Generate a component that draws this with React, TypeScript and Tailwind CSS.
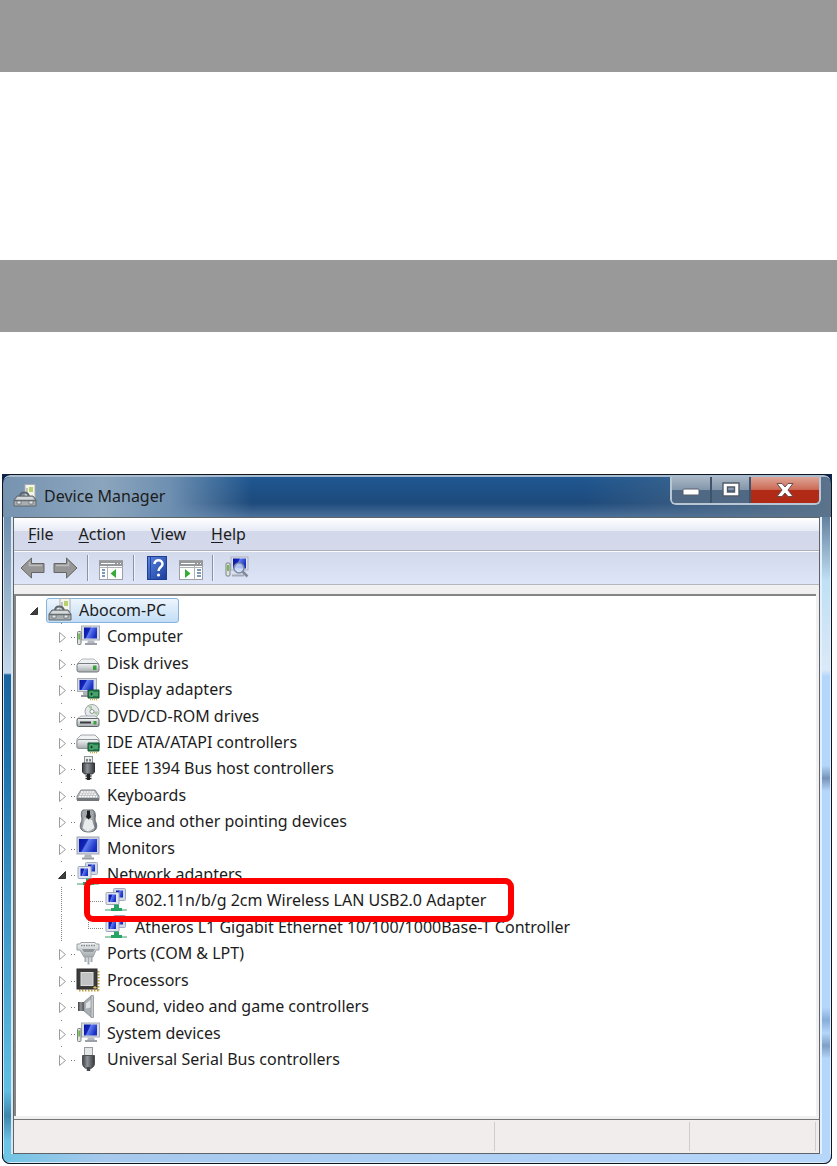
import React from 'react';

type IconName =
  | 'root' | 'computer' | 'disk' | 'display' | 'dvd' | 'ide' | 'firewire' | 'keyboard' | 'mouse'
  | 'monitor' | 'network' | 'ports' | 'cpu' | 'sound' | 'usb';

interface Device {
  label: string;
  icon: IconName;
  children?: { label: string; highlighted?: boolean }[];
}

const devices: Device[] = [
  { label: 'Computer', icon: 'computer' },
  { label: 'Disk drives', icon: 'disk' },
  { label: 'Display adapters', icon: 'display' },
  { label: 'DVD/CD-ROM drives', icon: 'dvd' },
  { label: 'IDE ATA/ATAPI controllers', icon: 'ide' },
  { label: 'IEEE 1394 Bus host controllers', icon: 'firewire' },
  { label: 'Keyboards', icon: 'keyboard' },
  { label: 'Mice and other pointing devices', icon: 'mouse' },
  { label: 'Monitors', icon: 'monitor' },
  {
    label: 'Network adapters',
    icon: 'network',
    children: [
      { label: '802.11n/b/g 2cm Wireless LAN USB2.0 Adapter', highlighted: true },
      { label: 'Atheros L1 Gigabit Ethernet 10/100/1000Base-T Controller' },
    ],
  },
  { label: 'Ports (COM & LPT)', icon: 'ports' },
  { label: 'Processors', icon: 'cpu' },
  { label: 'Sound, video and game controllers', icon: 'sound' },
  { label: 'System devices', icon: 'computer' },
  { label: 'Universal Serial Bus controllers', icon: 'usb' },
];

// Shared gradients, referenced by id from every icon
const IconDefs = () => (
  <svg width="0" height="0" className="absolute" aria-hidden="true">
    <defs>
      <linearGradient id="metal" x1="0" y1="0" x2="0" y2="1">
        <stop offset="0" stopColor="#f4f6f7" />
        <stop offset="1" stopColor="#a4a9ac" />
      </linearGradient>
      <linearGradient id="steel" x1="0" y1="0" x2="1" y2="0">
        <stop offset="0" stopColor="#6f757b" />
        <stop offset=".45" stopColor="#f2f4f5" />
        <stop offset="1" stopColor="#5c6168" />
      </linearGradient>
      <linearGradient id="screen" x1="0" y1="0" x2="1" y2="0.4">
        <stop offset="0" stopColor="#0715a4" />
        <stop offset=".42" stopColor="#1426b8" />
        <stop offset=".5" stopColor="#5f7cf0" />
        <stop offset="1" stopColor="#1a2fc4" />
      </linearGradient>
      <linearGradient id="dark" x1="0" y1="0" x2="1" y2="0">
        <stop offset="0" stopColor="#3c3f43" />
        <stop offset=".4" stopColor="#8f9398" />
        <stop offset="1" stopColor="#333539" />
      </linearGradient>
      <linearGradient id="help" x1="0" y1="0" x2="1" y2="1">
        <stop offset="0" stopColor="#5b86e0" />
        <stop offset="1" stopColor="#1b3c9c" />
      </linearGradient>
    </defs>
  </svg>
);

const Drive = () => (
  <>
    <path d="M6 8h12l5 5H1z" fill="#eef0f1" stroke="#a3a8ab" strokeWidth=".8" />
    <rect x="1" y="12.5" width="22" height="8.5" rx="2" fill="url(#metal)" stroke="#777c80" />
    <rect x="17" y="14.5" width="3.5" height="4.5" fill="#3aa03c" />
  </>
);

const Card = () => (
  <>
    <path d="M12 13h11v8H12z" fill="#23824c" stroke="#125032" />
    <path d="M14 15h3v4h-3zM19 15v4M21 15v4" fill="#0e3d26" stroke="#7fd09a" strokeWidth=".8" />
    <path d="M14 22.5h7" stroke="#c9a93a" strokeDasharray="1 1" strokeWidth="1.5" />
  </>
);

const drawings: Record<IconName, React.ReactNode> = {
  root: (
    <>
      <rect x="12" y="0.5" width="10" height="13" fill="#f4f6ee" stroke="#a9adab" />
      <path d="M16 3h4v5h-4z" fill="#b8d070" />
      <path d="M14 9v-5" stroke="#8b9199" />
      <path d="M7 13c0-6 8-6 9 0" fill="none" stroke="#60676c" strokeWidth="2.2" />
      <path d="M4 12h16l3 4v6H1v-6z" fill="#a9aeb1" stroke="#60676b" />
      <path d="M4.5 13h15l2 3h-19z" fill="#d5d9db" />
      <path d="M1 16.5h22" stroke="#666c70" strokeWidth="1.5" />
      <path d="M4 17h4v3H4zM16 17h4v3h-4z" fill="#e4e7e8" stroke="#6b7175" strokeWidth=".8" />
    </>
  ),
  computer: (
    <>
      <rect x="5.5" y="2" width="18" height="14" fill="#d7dbe4" stroke="#a8adb6" />
      <rect x="8" y="3.5" width="13" height="11" fill="url(#screen)" />
      <path d="M12 16.5h6l1 3h-8z" fill="#b4b9c0" />
      <path d="M9 20h12" stroke="#9ba0a8" strokeWidth="2" />
      <rect x="1.5" y="7.5" width="3.5" height="13" rx="1" fill="#dfe3e0" stroke="#7b8280" />
      <path d="M3.2 9.5v6" stroke="#6bb449" strokeWidth="1.8" />
    </>
  ),
  disk: <Drive />,
  display: (
    <>
      <rect x="1.5" y="1.5" width="19" height="13" fill="#d7dbe4" stroke="#a8adb6" />
      <rect x="3.5" y="3" width="14" height="10" fill="url(#screen)" />
      <path d="M7 15h6v3H7z" fill="#aeb3ba" />
      <path d="M5 19h9" stroke="#90959c" strokeWidth="2" />
      <Card />
    </>
  ),
  dvd: (
    <>
      <circle cx="16" cy="7.5" r="7" fill="#e4e8e9" stroke="#9fa4a7" />
      <path d="M16 7.5l-4-5.5h4zM16 7.5l5 4 1-4z" fill="#a9cba1" />
      <circle cx="16" cy="7.5" r="2" fill="#fff" stroke="#909598" />
      <path d="M5 12h14l4 3H1z" fill="#eef0f1" stroke="#9a9fa2" strokeWidth=".8" />
      <rect x="1" y="14.5" width="22" height="8" rx="1.5" fill="url(#metal)" stroke="#5f6568" />
      <path d="M4 18.5h11" stroke="#383c3f" strokeWidth="2" />
      <rect x="17.5" y="17" width="3" height="3.5" fill="#3aa03c" />
    </>
  ),
  ide: (
    <>
      <path d="M5 5h14l4 4v9H1V9z" fill="#f2f3f4" stroke="#a0a5a8" />
      <rect x="1" y="9.5" width="22" height="9" rx="2" fill="url(#metal)" stroke="#8d9296" />
      <Card />
    </>
  ),
  firewire: (
    <>
      <rect x="8.5" y="0.5" width="8" height="7" fill="#e8eaeb" stroke="#8c9194" />
      <path d="M11 3v2.5M14 3v2.5" stroke="#5b5f62" strokeWidth="1.5" />
      <path d="M6.5 7h12v9l-2 2h-8l-2-2z" fill="url(#dark)" stroke="#303336" />
      <path d="M9.5 20h6M9.5 22.5h6" stroke="#2e3134" strokeWidth="1.5" />
      <path d="M12.5 18v6" stroke="#222" strokeWidth="3" />
    </>
  ),
  keyboard: (
    <>
      <path d="M5 7h14l4 6v4H1v-4z" fill="#b9bcbf" stroke="#85898c" />
      <path d="M1 15h22v3H1z" fill="#73777a" />
      <path d="M5 9h14M4 11.2h16M3 13.5h18" stroke="#fff" strokeDasharray="2 .8" strokeWidth="1.3" />
    </>
  ),
  mouse: (
    <>
      <path d="M7 1h10c2 1 3 5 2 9 .5 4 3 6 1 10-2 4-13 4-15 0-2-4 .5-6 1-10-1-4-1-8 1-9z" fill="url(#steel)" stroke="#6a6f75" />
      <path d="M7.5 2H11v8l-3-2zM14 2h3v6l-3 2z" fill="#a3a8ad" />
      <path d="M11 1.5h3V5l1 3-2.5 2.5L10 8l1-3z" fill="#191b1d" />
      <path d="M9 11h7l2.5 8c-3 2.5-9 2.5-12 0z" fill="#e9ebed" />
    </>
  ),
  monitor: (
    <>
      <rect x="1" y="1" width="22" height="17" fill="#c9cee2" stroke="#a3a8b2" />
      <rect x="3" y="3" width="18" height="13" fill="url(#screen)" />
      <path d="M9 18.5h6l1 3H8z" fill="#adb2b9" />
      <path d="M6 22.5h12" stroke="#979ca3" strokeWidth="2" />
    </>
  ),
  network: (
    <>
      <rect x="9.5" y="0.5" width="12" height="12" rx="1" fill="#d3d9e8" stroke="#a3abc0" />
      <rect x="12" y="2.5" width="7" height="7" fill="url(#screen)" />
      <rect x="2" y="4.5" width="13" height="12" rx="1" fill="#e1e4ee" stroke="#9fa7bd" />
      <rect x="4.5" y="6.5" width="7.5" height="7.5" fill="url(#screen)" />
      <path d="M10 16.5h5v3.5h3v3H7v-3h3z" fill="#27a567" />
      <path d="M1 22h6M18 22h5" stroke="#9ecdb4" strokeWidth="2" />
    </>
  ),
  ports: (
    <>
      <path d="M1 3h3l1-1.5h14L20 3h3v6h-3l-3 7H8L4 9H1z" fill="url(#metal)" stroke="#9aa0a4" />
      <path d="M5 4.5h14" stroke="#7f8589" strokeDasharray="1.5 1" strokeWidth="1.5" />
      <path d="M6 8h13l-2 3H8z" fill="#8f969b" />
      <path d="M9.5 16v5M12.5 16v7.5M15.5 16v5" stroke="#a4aaaf" strokeWidth="2" />
    </>
  ),
  cpu: (
    <>
      <path d="M3 22.5h20M22.5 3v20" stroke="#c0a23c" strokeWidth="2" strokeDasharray="1.5 1.5" />
      <rect x="1" y="1" width="20" height="20" fill="#3b3b3b" stroke="#2c2c2c" />
      <rect x="5" y="4.5" width="12" height="13" fill="#c1c2c3" stroke="#dddddd" />
      <path d="M19 18.5l1.5 1.5h-3z" fill="#e5c45c" stroke="#e5c45c" />
    </>
  ),
  sound: (
    <>
      <path d="M2 8h7v9H2z" fill="url(#dark)" />
      <path d="M8 8l7-6h2v21h-2l-7-6z" fill="#a9b0b6" stroke="#777d82" strokeWidth=".7" />
      <path d="M10 9.5l5-4v8l-5 1z" fill="#dfe3e6" />
      <path d="M15 1.5h2.5v22H15z" fill="#c6cacd" stroke="#8b9094" strokeWidth=".7" />
    </>
  ),
  usb: (
    <>
      <rect x="8.5" y="0.5" width="8" height="9" fill="#e4e6e7" stroke="#979b9e" />
      <path d="M6.5 8.5h12v8c0 3-3 5-4 5h-4c-1 0-4-2-4-5z" fill="url(#dark)" stroke="#4d5053" />
      <path d="M12.5 20v4" stroke="#44474a" strokeWidth="3.5" />
    </>
  ),
};

const DeviceIcon: React.FC<{ name: IconName }> = ({ name }) => (
  <svg viewBox="0 0 24 24" className="w-6 h-6 shrink-0" aria-hidden="true">{drawings[name]}</svg>
);

const Expander: React.FC<{ label: string; open?: boolean }> = ({ label, open }) => (
  <button type="button" aria-label={label} aria-expanded={!!open} className="w-[18px] h-[26px] shrink-0">
    <svg viewBox="0 0 18 26" className="w-[18px] h-[26px]" aria-hidden="true">
      <path d="M3 0h1v1H3z" fill="#888" />
      {open ? (
        <path d="M.5 17.500h7v-7z" fill="#404040" stroke="#333" />
      ) : (
        <path d="M1.5 9.5v10l6-5z" fill="#fff" stroke="#9c9c9c" />
      )}
      <path d="M13 14h1v1h-1zM16 14h1v1h-1z" fill="#777" />
    </svg>
  </button>
);

const ChildGuide: React.FC<{ last: boolean }> = ({ last }) => (
  <svg viewBox="0 0 46 26" className="w-[46px] h-[26px] shrink-0" aria-hidden="true">
    <path d="M3.5 0v26" stroke="#888" strokeDasharray="1 1" />
    <path d={last ? 'M30.5 0v14' : 'M30.5 0v26'} stroke="#888" strokeDasharray="1 1" />
    <path d="M30 14.5h16" stroke="#888" strokeDasharray="1 1" />
  </svg>
);

const DeviceTree = () => (
  <ul className="flex flex-col justify-between min-h-[475px] text-base leading-[26px] whitespace-nowrap">
    <li className="flex items-center h-[26px] pl-3">
      <button type="button" aria-label="Abocom-PC" aria-expanded="true" className="w-[18px] shrink-0">
        <svg viewBox="0 0 18 26" className="w-[18px] h-[26px]" aria-hidden="true">
          <path d="M2.5 17.5h7v-7z" fill="#404040" stroke="#333" />
        </svg>
      </button>
      <span className="flex items-center gap-[7px] h-[25px] pl-px pr-3 rounded-[3px] border border-[#84b4dc] bg-linear-to-b from-[#edf5fd] to-[#c3ddf5]">
        <DeviceIcon name="root" />
        Abocom-PC
      </span>
    </li>
    {devices.map((device) => (
      <React.Fragment key={device.label}>
        <li className="flex items-center h-[26px] pl-[42px]">
          <Expander label={device.label} open={!!device.children} />
          <DeviceIcon name={device.icon} />
          <span className="pl-[7px]">{device.label}</span>
        </li>
        {device.children?.map((child, i) => (
          <li key={child.label} className="flex items-center h-[26px] pl-[42px]">
            <ChildGuide last={i === device.children!.length - 1} />
            <span className="relative flex items-center gap-[7px]">
              <DeviceIcon name="network" />
              {child.label}
              {child.highlighted && (
                <span className="absolute z-10 -left-5 -right-7 -inset-y-[9px] border-[6px] border-[#fe0000] rounded-[9px]" />
              )}
            </span>
          </li>
        ))}
      </React.Fragment>
    ))}
  </ul>
);

const MenuBar = () => (
  <nav className="flex items-center gap-[25px] h-8 pl-[14px] text-base bg-linear-to-b from-white from-0% via-[#e7ebf6] via-40% to-[#d3d9ea] to-42%">
    {['File', 'Action', 'View', 'Help'].map((item) => (
      <button key={item} type="button">
        <span className="underline underline-offset-2">{item[0]}</span>
        {item.slice(1)}
      </button>
    ))}
  </nav>
);

const Separator = () => <span className="w-px h-[26px] bg-[#8b93a3] border-r border-[#f0f3fb] box-content" />;

const Arrow: React.FC<{ label: string; right?: boolean }> = ({ label, right }) => (
  <button type="button" aria-label={label}>
    <svg viewBox="0 0 25 22" className="w-[25px] h-[22px]" aria-hidden="true">
      <path
        d={right ? 'M24 11L13.5 1v5.5H1v9h12.5V21z' : 'M1 11L11.5 1v5.5H24v9H11.5V21z'}
        fill="#969696"
        stroke="#666"
        strokeLinejoin="round"
      />
      <path d={right ? 'M3 8.5h12.5V5' : 'M22 8.5H9.5V5'} fill="none" stroke="#bdbdbd" strokeWidth="1.5" />
    </svg>
  </button>
);

const Pane: React.FC<{ label: string; right?: boolean }> = ({ label, right }) => (
  <button type="button" aria-label={label} className="pt-1">
    <svg viewBox="0 0 24 20" className="w-6 h-5" aria-hidden="true">
      <rect x="0.5" y="0.5" width="23" height="19" fill="#fff" stroke="#9da0a3" />
      <path d="M0 1h24v5H0z" fill="#95989b" />
      <path d="M2 3.5h14M18 3.5h1M21 3.5h1" stroke="#fff" />
      <path d={right ? 'M15.5 6v13.5M0 7.5h24' : 'M8.5 6v13.5M0 7.5h24'} stroke="#aeb1b4" />
      <path d={right ? 'M18 10h4M18 13h4M18 16h4' : 'M3 10h3M3 13h3M3 16h3'} stroke="#52799d" strokeWidth="1.5" />
      <path d={right ? 'M6 9v9l5.5-4.5z' : 'M17 9v9l-5.5-4.5z'} fill="#36aa35" />
    </svg>
  </button>
);

const ToolBar = () => (
  <div className="flex items-center h-[33px] pl-[6px] border-t border-[#fafbfe] bg-linear-to-b from-[#d2d9eb] to-[#dfe5f8]">
    <div className="flex gap-2 pr-[9px]">
      <Arrow label="Back" />
      <Arrow label="Forward" right />
    </div>
    <Separator />
    <div className="flex px-[10px]">
      <Pane label="Show console tree" />
    </div>
    <Separator />
    <div className="flex items-center gap-3 pl-3 pr-[9px]">
      <button type="button" aria-label="Help">
        <svg viewBox="0 0 20 24" className="w-5 h-6" aria-hidden="true">
          <rect x="0.5" y="0.5" width="19" height="23" fill="url(#help)" stroke="#1d3e91" />
          <path d="M3.5 1v22" stroke="#20479f" />
          <path d="M7.5 8c0-5 8-5 8 0 0 3-4 3-4 7" fill="none" stroke="#fff" strokeWidth="2.5" />
          <circle cx="11.5" cy="19" r="1.6" fill="#fff" />
        </svg>
      </button>
      <Pane label="Show action pane" right />
    </div>
    <Separator />
    <button type="button" aria-label="Scan for hardware changes" className="ml-[11px]">
      <svg viewBox="0 0 24 24" className="w-6 h-6" aria-hidden="true">
        <rect x="6" y="1" width="17" height="13" fill="#dfe3ee" stroke="#a9afc0" />
        <rect x="8" y="2.5" width="13" height="10" fill="url(#screen)" />
        <path d="M7 19.5h12" stroke="#a5abb5" strokeWidth="2" />
        <rect x="1" y="7" width="4" height="13" rx="1" fill="#dfe3e0" stroke="#7b8280" />
        <path d="M3 9v6" stroke="#6bb449" strokeWidth="1.8" />
        <circle cx="14" cy="12" r="5" fill="#cfe2fb" fillOpacity=".75" stroke="#7d899f" strokeWidth="1.5" />
        <path d="M17.5 15.5l5 5" stroke="#818a98" strokeWidth="2.5" />
      </svg>
    </button>
  </div>
);

const CaptionButtons = () => (
  <div className="flex h-7 w-[151px] mr-[10px] rounded-b-[6px] border-2 border-t-0 border-[#b9c6d3] overflow-hidden">
    <button type="button" aria-label="Minimize" className="flex w-10 items-center justify-center border-r-2 border-[#3f536b] bg-linear-to-b from-[#aab7c5] from-0% via-[#8296ab] via-50% to-[#4f6883] to-52%">
      <svg viewBox="0 0 18 8" className="w-[18px] h-2 mt-1" aria-hidden="true">
        <rect x="1" y="1" width="16" height="6" rx="1" fill="#fff" stroke="#59616d" />
      </svg>
    </button>
    <button type="button" aria-label="Maximize" className="flex w-[39px] items-center justify-center border-r-2 border-[#3f536b] bg-linear-to-b from-[#aab7c5] from-0% via-[#8296ab] via-50% to-[#4f6883] to-52%">
      <svg viewBox="0 0 18 16" className="w-[18px] h-4" aria-hidden="true">
        <path d="M1 1h16v13H1zM5.5 5v5h7V5z" fill="#fff" fillRule="evenodd" stroke="#515b68" strokeWidth="1.4" />
      </svg>
    </button>
    <button type="button" aria-label="Close" className="flex flex-1 items-center justify-center bg-linear-to-b from-[#dda597] from-0% via-[#cc6a55] via-48% to-[#b02a15] to-50%">
      <svg viewBox="0 0 18 16" className="w-[18px] h-4" aria-hidden="true">
        <path d="M1 1.5h5l3 3.5 3-3.5h5L12 8l5 6.5h-5L9 11l-3 3.5H1L6 8z" fill="#fff" stroke="#6a4a4d" />
      </svg>
    </button>
  </div>
);

const TitleBar = () => (
  <header className="h-[42px] border-t-2 border-[#a9bccf] rounded-t-[7px] bg-linear-to-b from-[#1f5791] from-0% via-[#1d4a7c] via-65% to-[#4a7099]">
    <div className="flex justify-between h-full rounded-t-[7px] bg-[linear-gradient(to_right,#7693b0_0%,#8ba5bd_12%,#6f90b1_20%,transparent_30%,transparent_70%,#5b738b_100%)]">
      <div className="flex items-center gap-[7px] pl-[10px] pb-[3px]">
        <DeviceIcon name="root" />
        <h1 className="text-base">Device Manager</h1>
      </div>
      <CaptionButtons />
    </div>
  </header>
);

const StatusBar = () => (
  <footer className="flex h-[34px] py-0.5 border-t border-[#777] bg-[#f0edec]">
    <span className="flex-[482] border-r border-[#cfcccb]" />
    <span className="flex-[195] border-r border-[#cfcccb]" />
    <span className="flex-[125] border-r border-[#cfcccb] mr-[3px]" />
  </footer>
);

export default function App() {
  return (
    <main className="bg-white font-['Noto_Sans',sans-serif] text-[#1c1c1c]">
      <IconDefs />
      <div className="h-[72px] bg-[#999999]" />
      <div className="h-[188px]" />
      <div className="h-[72px] bg-[#999999]" />
      <div className="h-[142px]" />
      <div className="ml-[2px] mr-[5px] bg-[#0b2450] rounded-b-[8px]">
        <section className="border border-[#10161f] rounded-[8px] overflow-hidden">
          <TitleBar />
          <div className="flex">
            <div className="w-[10px] shrink-0 border-l border-r-2 border-[#d6e6f2] bg-[linear-gradient(to_bottom,#6f8fae_0,#c4d8ea_156px,#1a649f_158px,#1f74ae_40%,#5fc0e4_90%,#3f86ac_94%,#6cc4e6_98%)]" />
            <div className="flex-1 min-w-0 border border-[#5e6468] bg-[#f0f0f0]">
              <MenuBar />
              <div className="border-t border-[#acafb8]">
                <ToolBar />
              </div>
              <div className="h-[10px] border-t border-[#b3b6bf]" />
              <div className="mr-[3px] mb-[3px] pt-px pb-11 border-l-2 border-t-2 border-[#858585] bg-white">
                <DeviceTree />
              </div>
              <StatusBar />
            </div>
            <div className="w-[11px] shrink-0 border-r border-l-2 border-[#e4f1fc] bg-[linear-gradient(to_bottom,#64819f_0%,#bfe0f5_10%,#dbe9f7_24%,#b4d6fa_25%,#b4d6fa_39%,#7593b8_41%,#b4d6fa_43%,#b4d6fa_77%,#86add9_79%,#b4d6fa_81%,#7f9fc6_83%,#b4d6fa_85%)]" />
          </div>
          <div className="h-[9px] border-b border-[#dcebf8] bg-linear-to-r from-[#6fc4e3] from-0% via-[#a6c8ed] via-12% to-[#b6d7fa]" />
        </section>
      </div>
    </main>
  );
}
